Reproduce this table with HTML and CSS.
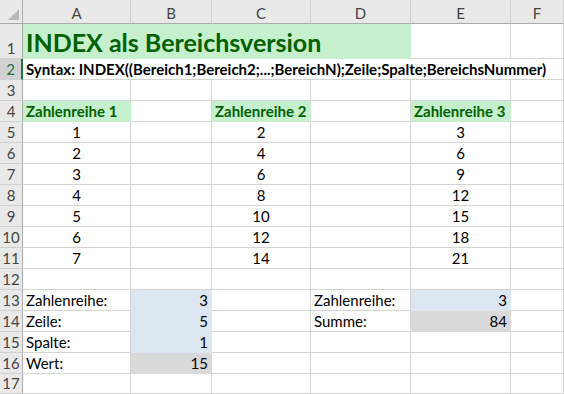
FILE: index.html
```html
<!DOCTYPE html>
<html lang="de">
<head>
    <meta charset="UTF-8">
    <title>INDEX als Bereichsversion</title>
    <link rel="stylesheet" href="styles.css">
</head>
<body>
    <div class="sheet">
        <!-- column headers -->
        <div class="corner"></div>
        <div class="col-head">A</div>
        <div class="col-head">B</div>
        <div class="col-head">C</div>
        <div class="col-head">D</div>
        <div class="col-head">E</div>
        <div class="col-head">F</div>

        <!-- 1 -->
        <div class="row-head">1</div>
        <div class="cell title good span4">INDEX als Bereichsversion</div>
        <div class="cell"></div>
        <div class="cell"></div>

        <!-- 2 -->
        <div class="row-head active">2</div>
        <div class="cell syntax span6">Syntax: INDEX((Bereich1;Bereich2;...;BereichN);Zeile;Spalte;BereichsNummer)</div>

        <!-- 3 -->
        <div class="row-head">3</div>
        <div class="cell"></div><div class="cell"></div><div class="cell"></div>
        <div class="cell"></div><div class="cell"></div><div class="cell"></div>

        <!-- 4 -->
        <div class="row-head">4</div>
        <div class="cell good head">Zahlenreihe 1</div>
        <div class="cell"></div>
        <div class="cell good head">Zahlenreihe 2</div>
        <div class="cell"></div>
        <div class="cell good head">Zahlenreihe 3</div>
        <div class="cell"></div>

        <div class="row-head">5</div>
        <div class="cell num">1</div><div class="cell"></div><div class="cell num">2</div>
        <div class="cell"></div><div class="cell num">3</div><div class="cell"></div>

        <div class="row-head">6</div>
        <div class="cell num">2</div><div class="cell"></div><div class="cell num">4</div>
        <div class="cell"></div><div class="cell num">6</div><div class="cell"></div>

        <div class="row-head">7</div>
        <div class="cell num">3</div><div class="cell"></div><div class="cell num">6</div>
        <div class="cell"></div><div class="cell num">9</div><div class="cell"></div>

        <div class="row-head">8</div>
        <div class="cell num">4</div><div class="cell"></div><div class="cell num">8</div>
        <div class="cell"></div><div class="cell num">12</div><div class="cell"></div>

        <div class="row-head">9</div>
        <div class="cell num">5</div><div class="cell"></div><div class="cell num">10</div>
        <div class="cell"></div><div class="cell num">15</div><div class="cell"></div>

        <div class="row-head">10</div>
        <div class="cell num">6</div><div class="cell"></div><div class="cell num">12</div>
        <div class="cell"></div><div class="cell num">18</div><div class="cell"></div>

        <div class="row-head">11</div>
        <div class="cell num">7</div><div class="cell"></div><div class="cell num">14</div>
        <div class="cell"></div><div class="cell num">21</div><div class="cell"></div>

        <div class="row-head">12</div>
        <div class="cell"></div><div class="cell"></div><div class="cell"></div>
        <div class="cell"></div><div class="cell"></div><div class="cell"></div>

        <div class="row-head">13</div>
        <div class="cell">Zahlenreihe:</div>
        <div class="cell value input">3</div>
        <div class="cell"></div>
        <div class="cell">Zahlenreihe:</div>
        <div class="cell value input">3</div>
        <div class="cell"></div>

        <div class="row-head">14</div>
        <div class="cell">Zeile:</div>
        <div class="cell value input">5</div>
        <div class="cell"></div>
        <div class="cell">Summe:</div>
        <div class="cell value result">84</div>
        <div class="cell"></div>

        <div class="row-head">15</div>
        <div class="cell">Spalte:</div>
        <div class="cell value input">1</div>
        <div class="cell"></div><div class="cell"></div><div class="cell"></div><div class="cell"></div>

        <div class="row-head">16</div>
        <div class="cell">Wert:</div>
        <div class="cell value result">15</div>
        <div class="cell"></div><div class="cell"></div><div class="cell"></div><div class="cell"></div>

        <div class="row-head">17</div>
        <div class="cell"></div><div class="cell"></div><div class="cell"></div>
        <div class="cell"></div><div class="cell"></div><div class="cell"></div>
    </div>
</body>
</html>
```

FILE: styles.css
```css
body {
    margin: 0;
    overflow: hidden;
    background: #fff;
    font-family: Lato, "Open Sans", sans-serif;
}
.sheet {
    display: grid;
    grid-template-columns: 23px 108px 81px 99px 100px 100px 53px;
    grid-template-rows: 24px 35px repeat(15, 21px) 20px;
}
.corner, .col-head, .row-head {
    background: #e9e9e9;
    color: #444;
    font-size: 15px;
    box-sizing: border-box;
}
.corner {
    position: relative;
    border-right: 1px solid #ababab;
    border-bottom: 1px solid #ababab;
}
.corner::after {
    content: "";
    position: absolute;
    right: 3px;
    bottom: 3px;
    border-style: solid;
    border-width: 0 0 11px 11px;
    border-color: transparent transparent #b8b8b8 transparent;
}
.col-head {
    display: flex;
    align-items: center;
    justify-content: center;
    border-right: 1px solid #cfcfcf;
    border-bottom: 1px solid #ababab;
    padding-top: 2px;
}
.col-head:last-child {
    border-right: none;
}
.row-head {
    display: flex;
    align-items: flex-end;
    justify-content: center;
    border-right: 1px solid #ababab;
    border-bottom: 1px solid #cfcfcf;
    padding-bottom: 1px;
    line-height: 18px;
}
.row-head.active {
    background: #d2d2d2;
    color: #217346;
    border-right: 2px solid #217346;
}
.cell {
    display: flex;
    align-items: flex-end;
    box-sizing: border-box;
    border-right: 1px solid #d4d4d4;
    border-bottom: 1px solid #d4d4d4;
    padding: 0 3px 1px;
    font-size: 15px;
    line-height: 18px;
    color: #000;
    white-space: nowrap;
}
.span4 { grid-column: span 4; }
.span6 { grid-column: span 6; }
.good {
    background: #c6efce;
    border-color: #c6efce;
    color: #006100;
}
.title {
    font-size: 25px;
    font-weight: 700;
    line-height: 30px;
    padding-bottom: 1px;
}
.syntax {
    font-weight: 700;
    overflow: hidden;
}
.head {
    font-weight: 700;
}
.num {
    justify-content: center;
}
.value {
    justify-content: flex-end;
}
.input {
    background: #dce6f1;
    border-color: #dce6f1;
}
.result {
    background: #d9d9d9;
    border-color: #d9d9d9;
}
```
